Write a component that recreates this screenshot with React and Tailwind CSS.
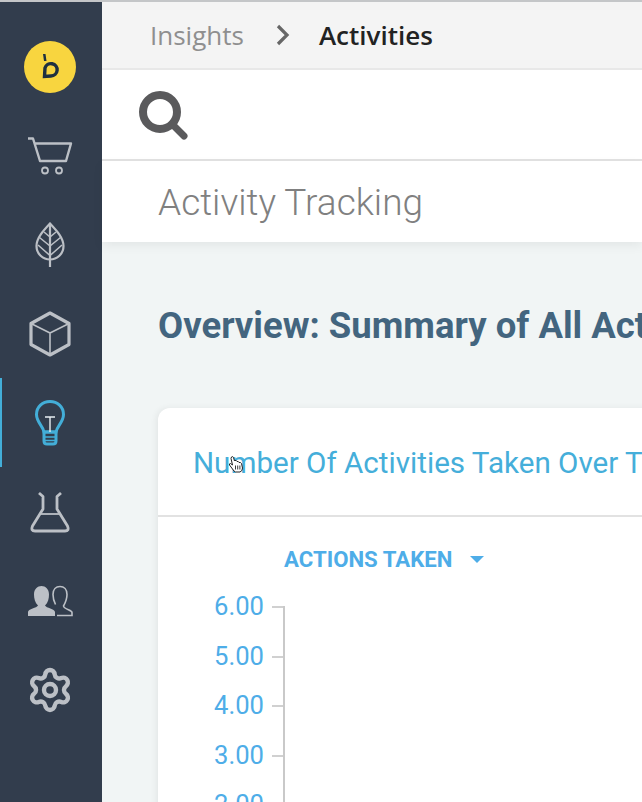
import { Settings } from "lucide-react";

const ticks = ["6.00", "5.00", "4.00", "3.00", "2.00"];

function NavItem({ active, children }) {
  return (
    <div className={`h-[89px] flex items-center justify-center border-l-2 pr-[4px] ${active ? "border-[#43aed8]" : "border-transparent"}`}>
      {children}
    </div>
  );
}

function Logo() {
  return (
    <svg width="52" height="52" viewBox="0 0 52 52">
      <circle cx="26" cy="26" r="26" fill="#f8d53f" />
      <path d="M19 13 L21.5 13 L22.5 20 L20 20 Z" fill="#1f3040" />
      <path d="M21 27 A6.2 6.2 0 1 1 27 35 L20.5 35.5 Z" fill="none" stroke="#1f3040" strokeWidth="3.4" />
    </svg>
  );
}

function Cart() {
  return (
    <svg width="46" height="40" viewBox="0 0 46 40" fill="none" stroke="#bcc0c6" strokeWidth="2.4">
      <path d="M1 2.5 H6 L13 25 H39 L44 7.5 H7.5" strokeLinejoin="round" />
      <circle cx="18" cy="34.5" r="3" strokeWidth="1.8" />
      <circle cx="32" cy="34.5" r="3" strokeWidth="1.8" />
    </svg>
  );
}

function Leaf() {
  return (
    <svg width="30" height="46" viewBox="0 0 30 46" fill="none" stroke="#bcc0c6" strokeWidth="2.2">
      <path d="M15 1.5 C8 9 1.5 16 1.5 24 C1.5 32 8 37.5 15 37.5 C22 37.5 28.5 32 28.5 24 C28.5 16 22 9 15 1.5 Z" />
      <path d="M15 1.5 V45" />
      <path d="M15 15 L9 10 M15 15 L21 10 M15 24 L4.5 15.5 M15 24 L25.5 15.5 M15 33.5 L3 23 M15 33.5 L27 23" strokeWidth="1.6" />
    </svg>
  );
}

function Cube() {
  return (
    <svg width="42" height="46" viewBox="0 0 42 46" fill="none" stroke="#bcc0c6" strokeLinejoin="round">
      <path d="M21 2 L40 12.5 V33.5 L21 44 L2 33.5 V12.5 Z" strokeWidth="3.2" />
      <path d="M2 12.5 L21 22 L40 12.5 M21 22 V44" strokeWidth="1.6" />
    </svg>
  );
}

function Bulb() {
  return (
    <svg width="30" height="46" viewBox="0 0 30 46" fill="none">
      <path d="M9 32 C8 26 1.5 22 1.5 14.5 C1.5 7 7.5 1.5 15 1.5 C22.5 1.5 28.5 7 28.5 14.5 C28.5 22 22 26 21 32 Z" stroke="#43aed8" strokeWidth="3" />
      <path d="M9 32 H21 V41 Q21 44 18 44 H12 Q9 44 9 41 Z" stroke="#43aed8" strokeWidth="3" />
      <path d="M9.5 37 H20.5 M9.5 40.5 H20.5" stroke="#43aed8" strokeWidth="1.5" />
      <path d="M10 17 H20 M15 17 V32" stroke="#e8eef2" strokeWidth="1.4" />
    </svg>
  );
}

function Flask() {
  return (
    <svg width="40" height="42" viewBox="0 0 40 42" fill="none" stroke="#bcc0c6" strokeWidth="2.8" strokeLinejoin="round">
      <path d="M9 2 L13 5.5 V18 L2.5 35 Q0.5 40 5 40 H35 Q39.5 40 37.5 35 L27 18 V5.5 L31 2" />
      <path d="M10 23 H30" strokeWidth="1.8" />
    </svg>
  );
}

function Users() {
  return (
    <svg width="46" height="32" viewBox="0 0 46 32">
      <path d="M1 31 V27 C1 24 10 23 11 20.5 C8 18 7 13.5 7 9.5 C7 4 10.5 1 14.5 1 C18.5 1 22 4 22 9.5 C22 13.5 21 18 18 20.5 C19 23 28 24 28 27 V31 Z" fill="#bcc0c6" />
      <path d="M30 30.5 H45 V27.5 C45 25 37 24.5 36.5 21 C38.5 17.5 40 14 40 9.5 C40 4.5 37 1.5 33 1.5 C29 1.5 26 4.5 26 9.5 C26 13 27 16.5 28.5 19.5" fill="none" stroke="#bcc0c6" strokeWidth="1.6" />
    </svg>
  );
}

function HandCursor() {
  return (
    <svg className="absolute left-[70px] top-[47px]" width="16" height="18" viewBox="0 0 16 18">
      <path d="M3.5 2 Q5 1 5.5 2.5 L6.5 6 L7 5.5 Q8.5 5 9 6.5 Q10.5 6 11 7.5 Q12.5 7 13.5 8.5 L14.5 13 Q14.5 16 12 17 H7.5 Q6 16.5 4.5 14 L1.5 10 Q1 8.5 2.5 8.5 L4.5 10 L3 3.5 Z" fill="#fff" stroke="#222" strokeWidth="1" strokeLinejoin="round" />
      <path d="M7.5 10.5 V14.5 M9.7 10.5 V14.5 M11.9 10.5 V14.5" stroke="#222" strokeWidth="0.9" />
    </svg>
  );
}

export default function App() {
  return (
    <div className="w-[642px] h-[802px] overflow-hidden flex flex-col bg-[#f1f5f5] font-['Roboto',sans-serif]">
      <div className="h-[2px] shrink-0 bg-[#c4c6c8]" />
      <div className="flex flex-1 min-h-0">
        {/* Sidebar */}
        <div className="w-[102px] shrink-0 bg-[#323d4d] pt-[20px]">
          <NavItem><Logo /></NavItem>
          <NavItem><Cart /></NavItem>
          <NavItem><Leaf /></NavItem>
          <NavItem><Cube /></NavItem>
          <NavItem active><Bulb /></NavItem>
          <NavItem><Flask /></NavItem>
          <NavItem><Users /></NavItem>
          <NavItem><Settings size={48} color="#bcc0c6" strokeWidth={2.2} /></NavItem>
        </div>

        <div className="flex-1 min-w-0 flex flex-col">
          {/* Breadcrumb */}
          <div className="h-[68px] shrink-0 bg-[#f4f4f4] border-b-2 border-[#e8e8e8] flex items-center pl-[48px] font-['Open_Sans',sans-serif] text-[26px]">
            <span className="text-[#8f8f8f]">Insights</span>
            <svg className="ml-[32px] mr-[29px]" width="14" height="22" viewBox="0 0 14 22" fill="none" stroke="#666666" strokeWidth="3.2">
              <path d="M2 2 L11 11 L2 20" />
            </svg>
            <span className="font-semibold text-[#222222]">Activities</span>
          </div>

          {/* Search */}
          <div className="h-[91px] shrink-0 bg-white border-b-2 border-[#e2e2e2] flex items-center pl-[36px] pt-[2px]">
            <svg width="50" height="50" viewBox="0 0 50 50" fill="none" stroke="#5a5a5c">
              <circle cx="22" cy="21" r="17" strokeWidth="8" />
              <path d="M34 33 L46 45" strokeWidth="7" strokeLinecap="round" />
            </svg>
          </div>

          {/* Page title */}
          <div className="h-[81px] shrink-0 bg-white shadow-[0_4px_10px_rgba(0,0,0,0.06)] flex items-center pl-[56px] pt-[2px] font-light text-[37px] text-[#808080] z-10">
            Activity Tracking
          </div>

          <div className="pl-[56px] pt-[61px]">
            <h1 className="font-bold text-[36.5px] leading-[46px] text-[#43657f] whitespace-nowrap">
              Overview: Summary of All Activities
            </h1>

            {/* Chart card */}
            <div className="mt-[59px] w-[600px] h-[500px] bg-white rounded-tl-xl shadow-[-2px_0_6px_rgba(0,0,0,0.06)]">
              <div className="relative h-[109px] border-b-2 border-[#e2e2e2] pl-[35px] pt-[33px] text-[29.6px] leading-[44px] text-[#45aeda] whitespace-nowrap">
                Number Of Activities Taken Over Time
                <HandCursor />
              </div>

              <div className="flex items-center pl-[126px] pt-[28px] font-bold text-[22.2px] leading-[28px] text-[#4eade8]">
                ACTIONS TAKEN
                <span className="ml-[18px] w-0 h-0 border-x-[7px] border-t-[7px] border-x-transparent border-t-[#4eade8]" />
              </div>

              <div className="mt-[33px] ml-[56px] w-fit border-r-2 border-[#c9c9c9]">
                {ticks.map((t) => (
                  <div key={t} className="h-[49.5px] flex items-start">
                    <span className="w-[50px] -mt-[16px] text-right text-[25.6px] leading-[32px] text-[#4eade8]">{t}</span>
                    <span className="ml-[8px] w-[11px] h-[2px] bg-[#d0d0d0]" />
                  </div>
                ))}
              </div>
            </div>
          </div>
        </div>
      </div>
    </div>
  );
}
